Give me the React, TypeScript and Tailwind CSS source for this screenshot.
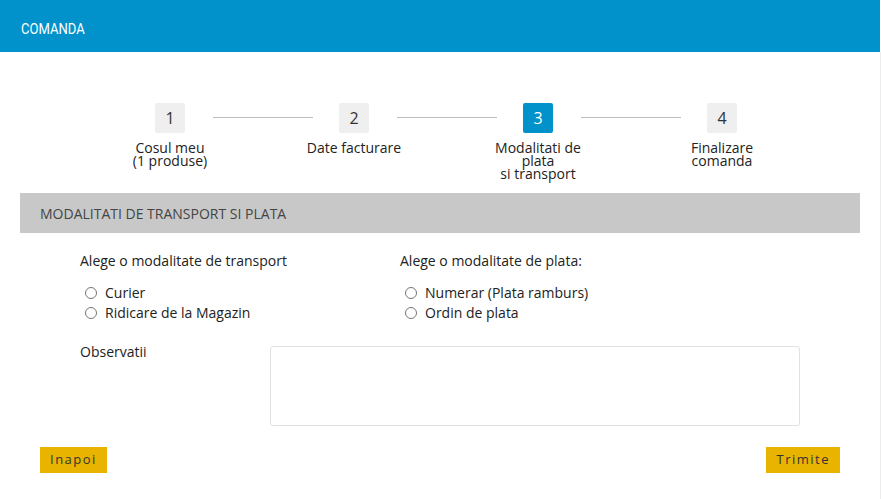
import React from "react";

const steps = [
  { n: "1", label: ["Cosul meu", "(1 produse)"] },
  { n: "2", label: ["Date facturare"] },
  { n: "3", label: ["Modalitati de", "plata", "si transport"], active: true },
  { n: "4", label: ["Finalizare", "comanda"] },
];

function Radio({ label }: { label: string }) {
  return (
    <div className="flex items-center h-[20px]">
      <span className="ml-[5px] w-[12px] h-[12px] rounded-full border border-[#767676] bg-white shrink-0" />
      <span className="ml-[8px]">{label}</span>
    </div>
  );
}

export default function App() {
  return (
    <div
      className="w-[881px] h-[499px] bg-white text-[14px] text-[#222] overflow-hidden"
      style={{ fontFamily: '"Open Sans", "Liberation Sans", sans-serif' }}
    >
      <div className="w-[880px] h-[52px] bg-[#0192cb] flex items-center pl-[21px] pt-[6px]">
        <span
          className="inline-block text-white text-[15px] origin-left scale-x-[0.87]"
          style={{ fontFamily: 'Roboto, "Liberation Sans", sans-serif' }}
        >
          COMANDA
        </span>
      </div>
      <div className="w-[881px] h-[447px] border-r border-[#ececec]">
        <div className="h-[141px] pt-[51px] pl-[78px] flex">
          {steps.map((s, i) => (
            <div key={s.n} className="w-[184px] flex flex-col items-center">
              <div className="flex items-center w-full">
                <div className="flex-1 flex justify-start">
                  {i > 0 && <div className="w-[51px] h-px bg-[#bdbdbd] -mt-[1px]" />}
                </div>
                <div
                  className={
                    "w-[30px] h-[30px] rounded-[2px] flex items-center justify-center text-[16px] " +
                    (s.active ? "bg-[#0192cb] text-white" : "bg-[#efefef] text-[#333]")
                  }
                >
                  {s.n}
                </div>
                <div className="flex-1 flex justify-end">
                  {i < steps.length - 1 && <div className="w-[49px] h-px bg-[#bdbdbd] -mt-[1px]" />}
                </div>
              </div>
              <div className="mt-[8px] text-center leading-[13px] text-[14px] text-[#222]">
                {s.label.map((l) => (
                  <div key={l}>{l}</div>
                ))}
              </div>
            </div>
          ))}
        </div>
        <div className="mx-[20px] h-[40px] bg-[#c8c8c8] flex items-center pl-[20px] text-[14px] text-[#444]">
          MODALITATI DE TRANSPORT SI PLATA
        </div>
        <div className="pl-[80px] pt-[18px] flex leading-[20px]">
          <div className="w-[320px]">
            <div>Alege o modalitate de transport</div>
            <div className="mt-[12px]">
              <Radio label="Curier" />
              <Radio label="Ridicare de la Magazin" />
            </div>
          </div>
          <div>
            <div>Alege o modalitate de plata:</div>
            <div className="mt-[12px]">
              <Radio label="Numerar (Plata ramburs)" />
              <Radio label="Ordin de plata" />
            </div>
          </div>
        </div>
        <div className="pl-[80px] mt-[19px] flex items-start">
          <div className="w-[190px] leading-[20px]">Observatii</div>
          <div className="mt-[4px] w-[530px] h-[80px] border border-[#e2e2e2] rounded-[3px] bg-white" />
        </div>
        <div className="mx-[40px] mt-[21px] flex justify-between">
          <div className="h-[26px] px-[10px] bg-[#e8b400] flex items-center text-[13px] tracking-[1.5px] text-[#333]">
            Inapoi
          </div>
          <div className="h-[26px] px-[10px] bg-[#e8b400] flex items-center text-[13px] tracking-[1.5px] text-[#333]">
            Trimite
          </div>
        </div>
      </div>
    </div>
  );
}
